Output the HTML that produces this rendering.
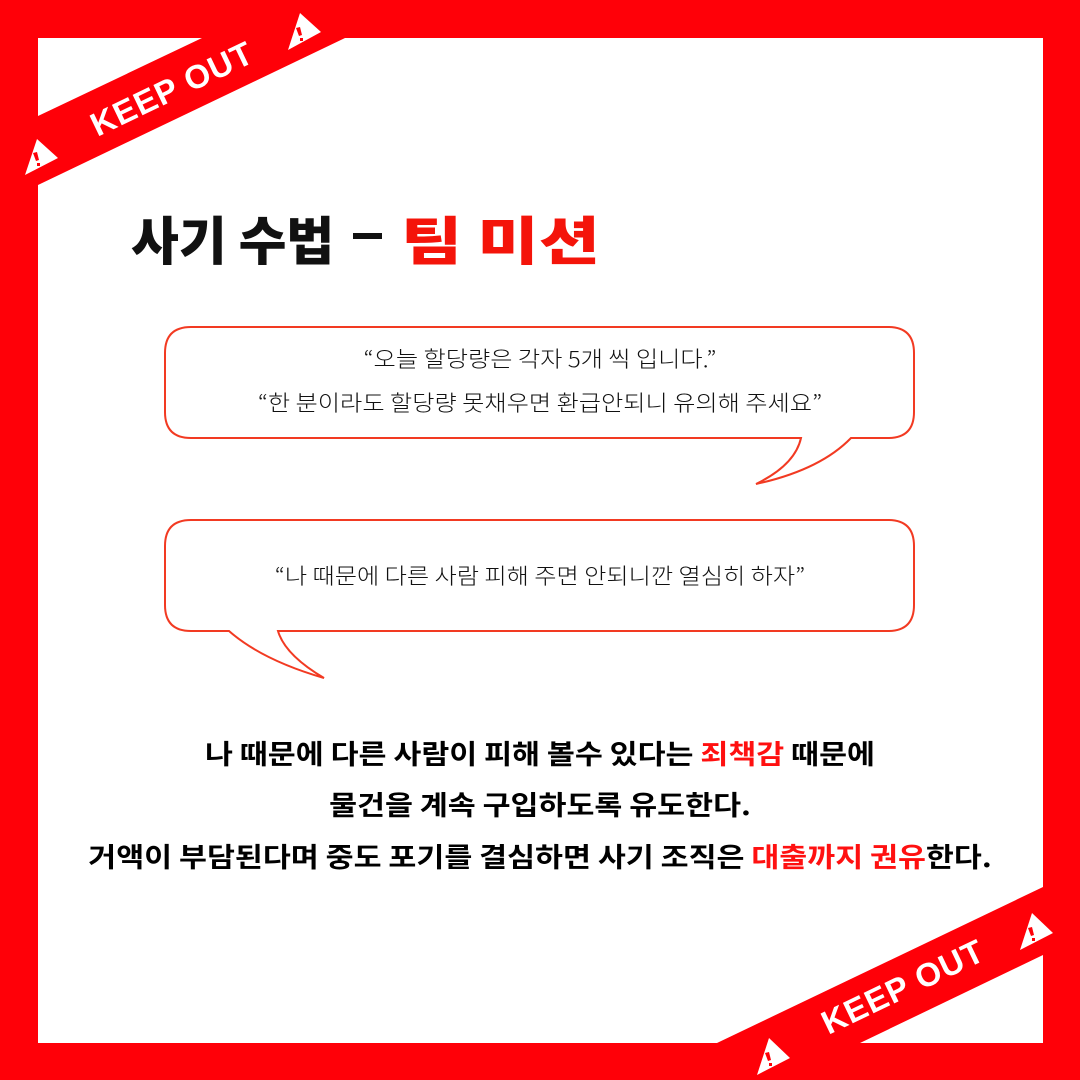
<!DOCTYPE html>
<html><head><meta charset="utf-8"><style>
html,body{margin:0;padding:0}
body{width:1080px;height:1080px;position:relative;overflow:hidden;background:#ff0008;font-family:"Liberation Sans","Noto Sans CJK KR",sans-serif}
.inner{position:absolute;left:38px;top:38px;width:1005px;height:1005px;background:#fff}
svg.ov{position:absolute;left:0;top:0}
.ko{position:absolute;color:#fff;font-weight:bold;font-size:33px;font-family:"Liberation Sans",sans-serif;transform:translate(-50%,-50%) rotate(-25.6deg);white-space:nowrap;letter-spacing:1px}
.title{position:absolute;top:200px;font-family:"Noto Sans CJK KR",sans-serif;font-weight:900;font-size:52px;color:#111;white-space:nowrap;transform-origin:0 0}
.bt{position:absolute;left:0;width:1080px;text-align:center;font-family:"Noto Sans CJK KR",sans-serif;font-weight:300;font-size:22px;color:#111;white-space:nowrap;transform:scaleX(1.1)}
.main{position:absolute;left:0;width:1080px;text-align:center;font-family:"Noto Sans CJK KR",sans-serif;font-weight:700;font-size:27px;color:#000;white-space:nowrap;transform:scaleX(1.125)}
.r{color:#ff1010}
</style></head><body>
<div class="inner"></div>
<svg class="ov" width="1080" height="1080">
<polygon points="202,38 345,38 38,185 38,116" fill="#ff0008"/>
<polygon points="1043,887 1043,955 860,1043 717,1043" fill="#ff0008"/>
<g fill="#fff">
<polygon points="25,175 37,139 58,158"/>
<polygon points="288,50 300,13 321,32"/>
<polygon points="1020,950 1032,913 1053,933"/>
<polygon points="757,1075 769,1038 790,1058"/>
</g>
<g fill="#ff0008">
<polygon points="33,153 37,152 39,160 36,161"/><rect x="37" y="163" width="3" height="3"/>
<polygon points="296,28 300,27 302,35 299,36"/><rect x="300" y="38" width="3" height="3"/>
<polygon points="1028,928 1032,927 1034,935 1031,936"/><rect x="1032" y="938" width="3" height="3"/>
<polygon points="765,1053 769,1052 771,1060 768,1061"/><rect x="769" y="1063" width="3" height="3"/>
</g>
<rect x="353" y="233" width="29" height="6" fill="#111"/>
<g fill="#fff" stroke="#f23a22" stroke-width="2">
<path d="M191,327 H888 Q914,327 914,353 V412 Q914,438 888,438 H851 Q820,470 756,484 Q795,465 801,438 H191 Q165,438 165,412 V353 Q165,327 191,327 Z"/>
<path d="M191,520 H888 Q914,520 914,546 V605 Q914,631 888,631 H278 Q285,655 324,678 Q262,660 229,631 H191 Q165,631 165,605 V546 Q165,520 191,520 Z"/>
</g>
</svg>
<div class="ko" style="left:172px;top:89px">KEEP OUT</div>
<div class="ko" style="left:903px;top:987px">KEEP OUT</div>
<div class="title" style="left:131px;transform:scaleX(1.0)">사기 수법</div>
<div class="title" style="left:401px;color:#f4140a;transform:scaleX(1.28)">팀 미션</div>
<div class="bt" style="top:342px">“오늘 할당량은 각자 5개 씩 입니다.”</div>
<div class="bt" style="top:386px">“한 분이라도 할당량 못채우면 환급안되니 유의해 주세요”</div>
<div class="bt" style="top:559px">“나 때문에 다른 사람 피해 주면 안되니깐 열심히 하자”</div>
<div class="main" style="top:733px">나 때문에 다른 사람이 피해 볼수 있다는 <span class="r">죄책감</span> 때문에</div>
<div class="main" style="top:784px">물건을 계속 구입하도록 유도한다.</div>
<div class="main" style="top:836px">거액이 부담된다며 중도 포기를 결심하면 사기 조직은 <span class="r">대출까지 권유</span>한다.</div>
</body></html>
